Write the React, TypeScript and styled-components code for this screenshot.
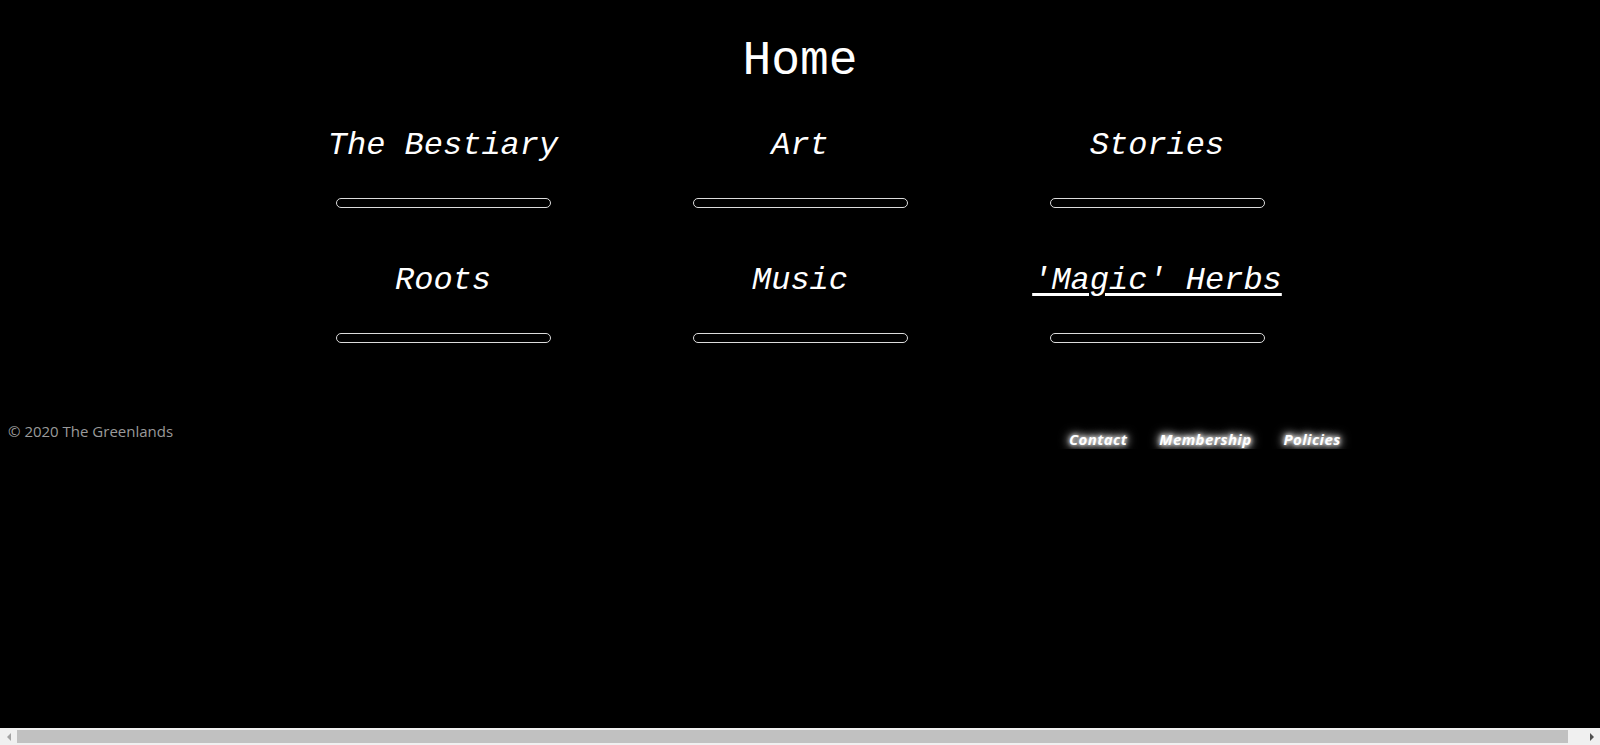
import styled, { createGlobalStyle } from "styled-components";

const sections = [
  { name: "The Bestiary", active: false },
  { name: "Art", active: false },
  { name: "Stories", active: false },
  { name: "Roots", active: false },
  { name: "Music", active: false },
  { name: "'Magic' Herbs", active: true },
];

const footerLinks = ["Contact", "Membership", "Policies"];

export default function App() {
  return (
    <>
      <GlobalStyle />
      <Header>
        <Title>Home</Title>
      </Header>
      <SectionGrid>
        {sections.map((s) => (
          <SectionCell key={s.name}>
            <SectionLink href="#" $active={s.active}>
              {s.name}
            </SectionLink>
            <Bar />
          </SectionCell>
        ))}
      </SectionGrid>
      <Footer>
        <Copyright>© 2020 The Greenlands</Copyright>
        <FooterNav>
          {footerLinks.map((l) => (
            <FooterLink key={l} href="#">
              {l}
            </FooterLink>
          ))}
        </FooterNav>
      </Footer>
      <ScrollStrip aria-hidden>
        <ScrollArrow $dir="left" $disabled />
        <ScrollTrack>
          <ScrollThumb />
        </ScrollTrack>
        <ScrollArrow $dir="right" />
      </ScrollStrip>
    </>
  );
}

const GlobalStyle = createGlobalStyle`
  html {
    background-color: #000;
  }
  body {
    margin: 8px;
    background-color: #000;
    color: #fff;
    font-family: "Liberation Mono", "Courier New", monospace;
  }
`;

const Header = styled.header`
  display: flex;
  justify-content: center;
  padding-top: 26px;
`;

const Title = styled.h1`
  margin: 0;
  font-family: "Liberation Mono", "Courier New", monospace;
  font-weight: normal;
  font-size: 48px;
  color: #fff;
`;

const SectionGrid = styled.div`
  display: grid;
  grid-template-columns: repeat(3, 357px);
  justify-content: center;
  padding-top: 39px;
`;

const SectionCell = styled.div`
  display: flex;
  flex-direction: column;
  align-items: center;
  height: 135px;
`;

const SectionLink = styled.a<{ $active: boolean }>`
  font-family: "Liberation Mono", "Courier New", monospace;
  font-style: italic;
  font-size: 32px;
  color: #fff;
  text-decoration: ${(p) => (p.$active ? "underline" : "none")};
  text-decoration-thickness: 3px;
  text-underline-offset: 4px;
`;

const Bar = styled.div`
  margin-top: 34px;
  width: 213px;
  height: 8px;
  border: 1px solid #dcdcdc;
  border-radius: 5px;
`;

const Footer = styled.footer`
  display: grid;
  grid-template-columns: 1061px auto;
  align-items: start;
  margin-top: 24px;
`;

const Copyright = styled.p`
  margin: 0;
  font-family: "Open Sans", "Noto Sans", sans-serif;
  font-size: 15px;
  color: #9a9a9a;
`;

const FooterNav = styled.nav`
  display: flex;
  gap: 32px;
  padding-top: 8px;
`;

const FooterLink = styled.a`
  font-family: "Open Sans", "Noto Sans", sans-serif;
  font-weight: bold;
  font-style: italic;
  font-size: 15px;
  letter-spacing: 0.4px;
  color: #fff;
  text-decoration: none;
  text-shadow: 0 0 4px #fff, 0 0 8px #fff, 0 0 12px #fff;
`;

/* browser's horizontal scrollbar, the page is a bit wider than the window */
const ScrollStrip = styled.div`
  position: fixed;
  left: 0;
  right: 0;
  bottom: 0;
  height: 17px;
  display: flex;
  background: #f0f0f0;
`;

const ScrollArrow = styled.div<{ $dir: "left" | "right"; $disabled?: boolean }>`
  width: 17px;
  display: flex;
  align-items: center;
  justify-content: center;

  &::before {
    content: "";
    width: 0;
    height: 0;
    border-top: 4px solid transparent;
    border-bottom: 4px solid transparent;
    ${(p) =>
      p.$dir === "left"
        ? `border-right: 4px solid ${p.$disabled ? "#a3a3a3" : "#505050"};`
        : `border-left: 4px solid ${p.$disabled ? "#a3a3a3" : "#505050"};`}
  }
`;

const ScrollTrack = styled.div`
  flex: 1;
  padding: 2px 0;
`;

const ScrollThumb = styled.div`
  width: calc(100% - 15px);
  height: 100%;
  background: #c1c1c1;
`;
